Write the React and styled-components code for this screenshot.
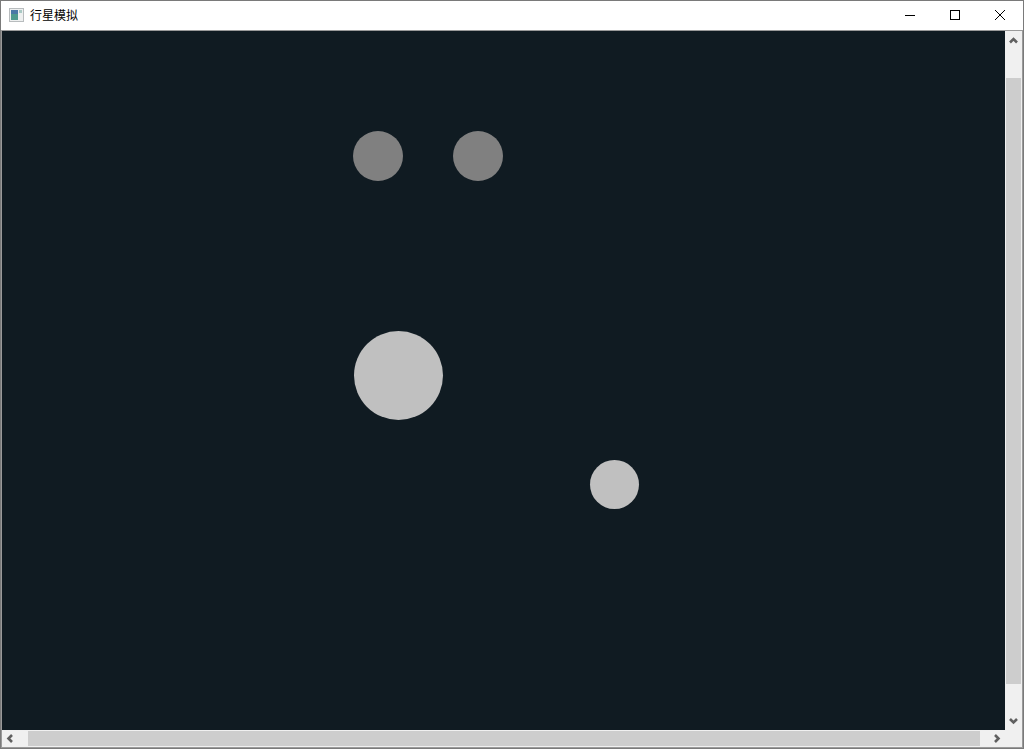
import styled, { createGlobalStyle } from "styled-components";

const GlobalStyle = createGlobalStyle`
    html, body {
        margin: 0;
        padding: 0;
        width: 1024px;
        height: 749px;
        overflow: hidden;
        background: #ffffff;
    }
`
const Window = styled.div`
    display: flex;
    flex-direction: column;
    box-sizing: border-box;
    width: 1024px;
    height: 749px;
    border: 1px solid #7a7a7a;
    background: #ffffff;
    font-family: "Noto Sans CJK SC", "Liberation Sans", sans-serif;
`
const TitleBar = styled.header`
    display: flex;
    align-items: center;
    box-sizing: border-box;
    flex: 0 0 29px;
    padding: 0 1px 1px 8px;
    background: #ffffff;
`
const AppIcon = styled.svg`
    display: block;
    width: 16px;
    height: 16px;
    margin-right: 5px;
`
const Title = styled.span`
    flex: 1;
    font-size: 12px;
    line-height: 16px;
    color: #000000;
`
const WindowButton = styled.div`
    display: flex;
    align-items: center;
    justify-content: center;
    width: 45px;
    height: 28px;
`
const ButtonIcon = styled.svg`
    display: block;
    width: 10px;
    height: 10px;
`
const Divider = styled.div`
    flex: 0 0 1px;
    background: #9a9a9a;
`
const Body = styled.div`
    display: grid;
    flex: 1;
    min-height: 0;
    grid-template-columns: 1fr 17px;
    grid-template-rows: 1fr 17px;
    border: 1px solid #9a9a9a;
    border-top: 0;
    background: #f0f0f0;
`
const Canvas = styled.main`
    position: relative;
    background: #101b22;
    overflow: hidden;
`
const Planet = styled.div`
    position: absolute;
    left: ${(props) => props.$x}px;
    top: ${(props) => props.$y}px;
    width: ${(props) => props.$size}px;
    height: ${(props) => props.$size}px;
    border-radius: 50%;
    background: ${(props) => props.$color};
`
const VerticalBar = styled.div`
    display: flex;
    flex-direction: column;
    background: #f0f0f0;
`
const HorizontalBar = styled.div`
    display: flex;
    background: #f0f0f0;
`
const Arrow = styled.div`
    display: flex;
    flex: 0 0 17px;
    align-items: center;
    justify-content: center;
`
const VerticalTrack = styled.div`
    flex: 1;
    padding: 30px 1px 0;
`
const HorizontalTrack = styled.div`
    flex: 1;
    padding: 1px 0 1px 9px;
`
const VerticalThumb = styled.div`
    height: 606px;
    background: #cdcdcd;
`
const HorizontalThumb = styled.div`
    width: 952px;
    height: 100%;
    background: #cdcdcd;
`
const Corner = styled.div`
    background: #f0f0f0;
`
const ArrowIcon = styled.svg`
    display: block;
    width: 9px;
    height: 9px;
    overflow: visible;
`

const planets = [
    { x: 351.3, y: 100, size: 50, color: "#808080" },
    { x: 451.3, y: 100, size: 50, color: "#808080" },
    { x: 352, y: 300, size: 89, color: "#c0c0c0" },
    { x: 588, y: 429, size: 49, color: "#c0c0c0" },
];

const arrows = {
    up: "M1 7.5 L4.5 4 L8 7.5",
    down: "M1 2 L4.5 5.5 L8 2",
    left: "M6 1 L2.5 4.5 L6 8",
    right: "M3 1 L6.5 4.5 L3 8",
};

const ScrollArrow = ({ dir }) => (
    <Arrow>
        <ArrowIcon viewBox="0 0 9 9">
            <path d={arrows[dir]} fill="none" stroke="#606060" strokeWidth="2.6" />
        </ArrowIcon>
    </Arrow>
);

const App = () => {
    return (
        <Window>
            <GlobalStyle />
            <TitleBar>
                <AppIcon viewBox="0 0 16 16">
                    <rect x="0.5" y="1.5" width="14" height="13" fill="#eef0f0" stroke="#b8bcbe" />
                    <rect x="2" y="3" width="7" height="10" fill="#4f9a8e" />
                    <rect x="2" y="3" width="7" height="4" fill="#4a78a6" />
                    <rect x="10" y="3" width="3" height="3" fill="#a9c9c4" />
                </AppIcon>
                <Title>行星模拟</Title>
                <WindowButton>
                    <ButtonIcon viewBox="0 0 10 10">
                        <path d="M0 5.5 H10" stroke="#000000" strokeWidth="1" />
                    </ButtonIcon>
                </WindowButton>
                <WindowButton>
                    <ButtonIcon viewBox="0 0 10 10">
                        <rect x="0.5" y="0.5" width="9" height="9" fill="none" stroke="#000000" />
                    </ButtonIcon>
                </WindowButton>
                <WindowButton>
                    <ButtonIcon viewBox="0 0 10 10">
                        <path d="M0 0 L10 10 M10 0 L0 10" stroke="#000000" strokeWidth="1" />
                    </ButtonIcon>
                </WindowButton>
            </TitleBar>
            <Divider />
            <Body>
                <Canvas>
                    {planets.map((planet) => (
                        <Planet
                            key={`${planet.x}-${planet.y}`}
                            $x={planet.x}
                            $y={planet.y}
                            $size={planet.size}
                            $color={planet.color}
                        />
                    ))}
                </Canvas>
                <VerticalBar>
                    <ScrollArrow dir="up" />
                    <VerticalTrack>
                        <VerticalThumb />
                    </VerticalTrack>
                    <ScrollArrow dir="down" />
                </VerticalBar>
                <HorizontalBar>
                    <ScrollArrow dir="left" />
                    <HorizontalTrack>
                        <HorizontalThumb />
                    </HorizontalTrack>
                    <ScrollArrow dir="right" />
                </HorizontalBar>
                <Corner />
            </Body>
        </Window>
    );
};

export default App;
